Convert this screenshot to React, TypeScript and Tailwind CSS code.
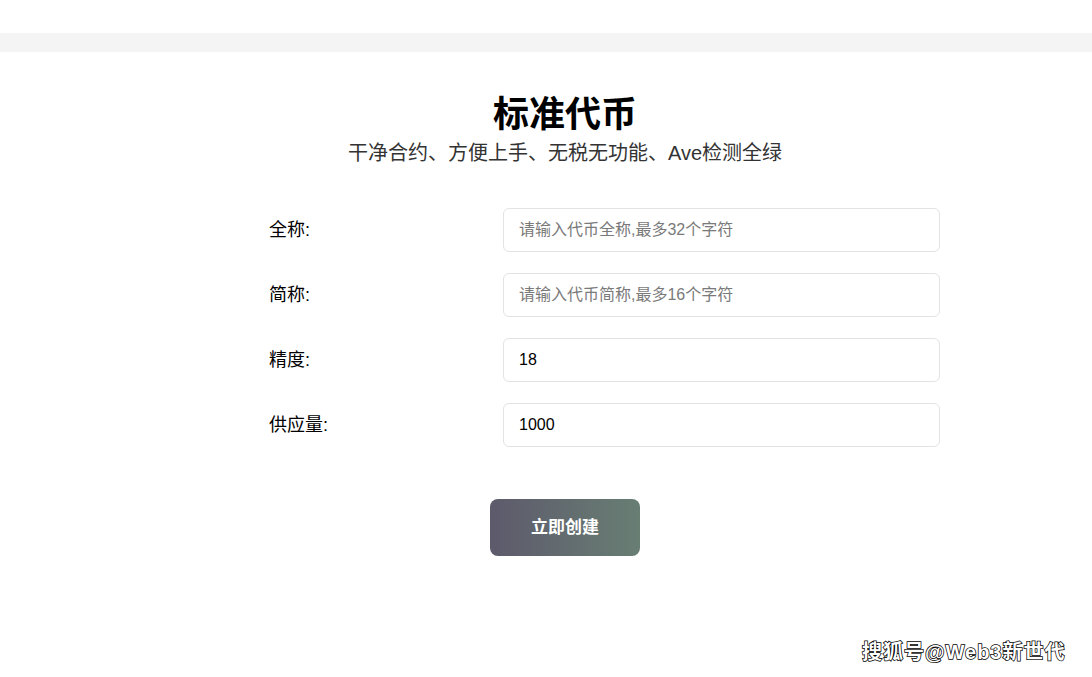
import { useState } from "react";

const fields = [
  { label: "全称", placeholder: "请输入代币全称,最多32个字符", init: "" },
  { label: "简称", placeholder: "请输入代币简称,最多16个字符", init: "" },
  { label: "精度", placeholder: "", init: "18" },
  { label: "供应量", placeholder: "", init: "1000" },
];

const App = () => {
  const [values, setValues] = useState<string[]>(fields.map((f) => f.init));

  const onChange = (i: number, v: string) => {
    const next = [...values];
    next[i] = v;
    setValues(next);
  };

  return (
    <div className="relative w-[1092px] h-[677px] bg-white overflow-hidden font-['Liberation_Sans','Noto_Sans_CJK_SC',sans-serif]">
      <div className="h-[33px]" />
      <div className="h-[19px] bg-[#f4f4f4]" />
      <div className="w-[800px] ml-[165px] flex flex-col items-center">
        <h1 className="mt-[38px] text-[36px] leading-[50px] font-bold text-black">标准代币</h1>
        <p className="text-[20px] leading-[26px] text-[#333]">干净合约、方便上手、无税无功能、Ave检测全绿</p>
        <div className="mt-[42px] w-[671px] ml-[104px] self-start flex flex-col gap-[21px]">
          {fields.map((f, i) => (
            <div key={f.label} className="flex items-center">
              <label className="w-[234px] text-[18px] text-black">{f.label}:</label>
              <input
                className="w-[437px] h-[44px] px-[15px] rounded-[6px] border border-[#e3e3e3] text-[16px] text-black placeholder:text-[#7a7a7a] outline-none"
                placeholder={f.placeholder}
                value={values[i]}
                onChange={(e) => onChange(i, e.target.value)}
              />
            </div>
          ))}
        </div>
        <button className="mt-[52px] w-[150px] h-[57px] rounded-[8px] bg-gradient-to-r from-[#5d5a6b] to-[#687e73] text-white text-[17px] font-bold">
          立即创建
        </button>
      </div>
      <div className="absolute left-[862px] top-[638px] text-[20px] leading-[28px] tracking-[1px] font-bold text-white [-webkit-text-stroke:1.5px_#000] [paint-order:stroke_fill]">
        搜狐号@Web3新世代
      </div>
    </div>
  );
};

export default App;
